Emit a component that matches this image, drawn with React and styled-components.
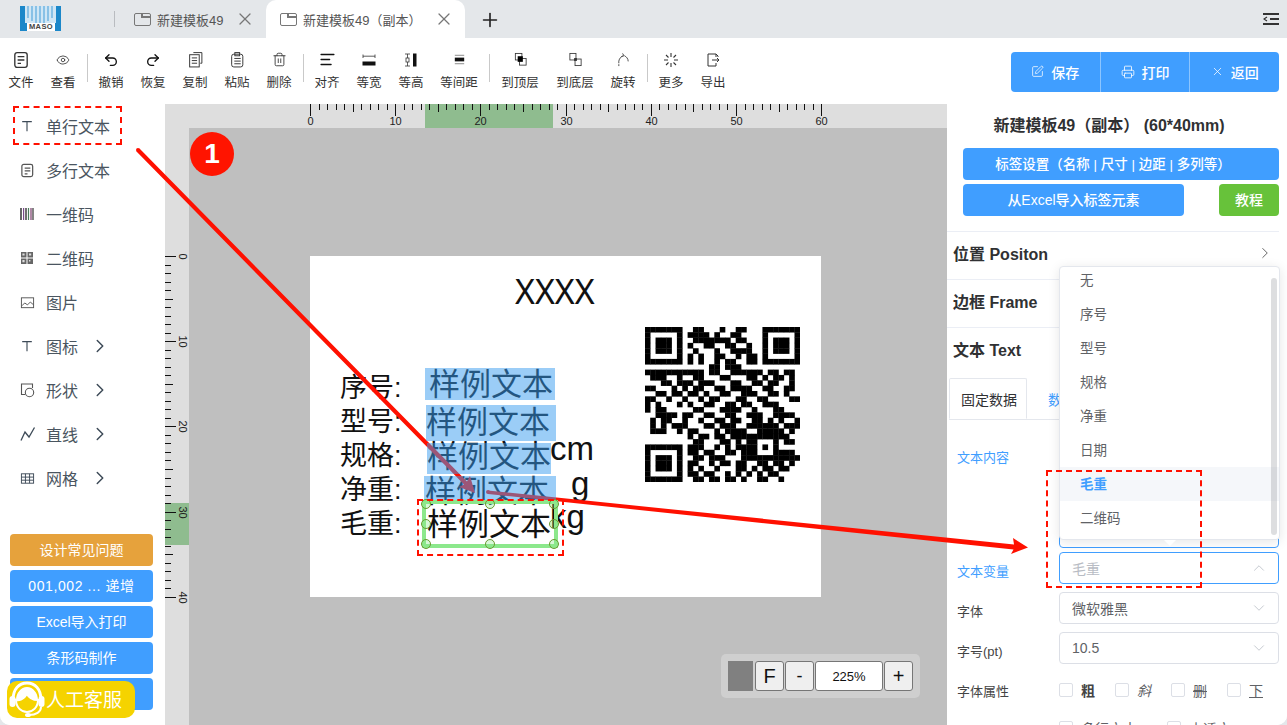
import React from "react";
import styled, { createGlobalStyle } from "styled-components";
import { Eye, Undo2, Redo2, Trash2, AlignLeft, SquarePen, Printer, X, Plus, ChevronRight, ChevronDown, ChevronUp } from "lucide-react";

const FONT = `"Liberation Sans", "Noto Sans CJK SC", sans-serif`;

const GlobalStyle = createGlobalStyle`
  html, body { margin: 0; padding: 0; background: #e4e7ea; }
  body { font-family: ${FONT}; }
  * { box-sizing: border-box; }
`;

// small hand drawn icons, viewBox 16
const Glyph = ({ size = 16, children, sw = 1.2 }) => (
  <svg width={size} height={size} viewBox="0 0 16 16" fill="none" stroke="#333" strokeWidth={sw}>
    {children}
  </svg>
);

const toolIcons = {
  file: (
    <Glyph size={18}>
      <rect x="2.5" y="1.5" width="11" height="13" rx="2" />
      <path d="M5 5h6M5 8h6M5 11h3" />
    </Glyph>
  ),
  eye: <Eye size={14} color="#333" strokeWidth={1.4} />,
  undo: <Undo2 size={16} color="#111" strokeWidth={2} />,
  redo: <Redo2 size={16} color="#111" strokeWidth={2} />,
  copy: (
    <Glyph size={17} sw={0.9}>
      <path d="M6 1.5h8v10h-1.5" />
      <rect x="2.5" y="3.5" width="9" height="11.5" />
      <path d="M4.5 6.5h5M4.5 9h5M4.5 11.5h5" />
    </Glyph>
  ),
  paste: (
    <Glyph size={17} sw={0.9}>
      <rect x="2.5" y="3" width="10.5" height="12" rx="2" />
      <rect x="5.5" y="1.5" width="4.5" height="3" />
      <path d="M5 7h6M5 9.5h6M5 12h6" />
    </Glyph>
  ),
  trash: <Trash2 size={15} color="#333" strokeWidth={1.4} />,
  align: <AlignLeft size={17} color="#111" strokeWidth={2} />,
  eqWidth: (
    <Glyph sw={0.8}>
      <path d="M2 2.5v3.5M14 2.5v3.5M2 4.2h12" />
      <rect x="1.5" y="9.5" width="13" height="4" fill="#111" stroke="none" />
    </Glyph>
  ),
  eqHeight: (
    <Glyph sw={0.8}>
      <path d="M2 2h5M2 14h5M4.5 2v4M4.5 10v4" />
      <rect x="3" y="6" width="3" height="4" />
      <rect x="10" y="1.5" width="3.5" height="13" fill="#111" stroke="none" />
    </Glyph>
  ),
  spacing: (
    <Glyph size={15} sw={0.8}>
      <path d="M3 3.5h10M3 12.5h10" stroke="#666" />
      <rect x="3" y="6" width="10" height="4" fill="#111" stroke="none" />
    </Glyph>
  ),
  top: (
    <Glyph size={15} sw={0.9}>
      <rect x="2.5" y="1.5" width="7" height="7" fill="#fff" />
      <rect x="7" y="7" width="7" height="7" fill="#fff" />
      <rect x="5" y="4.5" width="5.5" height="6" fill="#000" stroke="none" />
    </Glyph>
  ),
  bottom: (
    <Glyph size={15} sw={0.9}>
      <rect x="2" y="1.5" width="6.5" height="7" />
      <rect x="7.5" y="7.5" width="6.5" height="7" />
      <rect x="6.5" y="6.5" width="3" height="3" fill="#333" stroke="none" />
    </Glyph>
  ),
  rotate: (
    <Glyph size={15} sw={0.9}>
      <path d="M3 12c-.5-3 1-6 4-8M9 4c2 1 4 3 4 6" />
      <path d="M7 1.5l1.5 2.5-2.5 1M3 15v-2" />
    </Glyph>
  ),
  more: (
    <Glyph sw={1.1}>
      <path d="M8 1v4M8 11v4M1 8h4M11 8h4M3 3l2.5 2.5M13 3l-2.5 2.5M3 13l2.5-2.5M13 13l-2.5-2.5" />
    </Glyph>
  ),
  export: (
    <Glyph sw={1}>
      <path d="M11 5V2H3v12h8v-3M11 2l2 2v1" />
      <path d="M7 8h7M12 6l2 2-2 2" />
    </Glyph>
  ),
};

const TOOLS = [
  [["文件", "file"], ["查看", "eye"]],
  [["撤销", "undo"], ["恢复", "redo"], ["复制", "copy"], ["粘贴", "paste"], ["删除", "trash"]],
  [["对齐", "align"], ["等宽", "eqWidth"], ["等高", "eqHeight"], ["等间距", "spacing", 54]],
  [["到顶层", "top", 56], ["到底层", "bottom", 54], ["旋转", "rotate"]],
  [["更多", "more"], ["导出", "export"]],
];

const sideIcons = {
  t: (
    <Glyph size={14} sw={1.3}>
      <path d="M2.5 3h11M8 3v11" stroke="#3d4a57" />
    </Glyph>
  ),
  doc: (
    <Glyph size={15} sw={1.3}>
      <rect x="2" y="1.5" width="11.5" height="13" rx="2" stroke="#555" />
      <path d="M5 5.5h6M5 8.5h6M5 11.5h3" stroke="#555" />
    </Glyph>
  ),
  bar: (
    <svg width="14" height="14" viewBox="0 0 14 12">
      <path d="M1 0v12" stroke="#333" strokeWidth="1.5" />
      <path d="M3.6 0v12" stroke="#7a4a8a" strokeWidth="1.2" />
      <path d="M6 0v12" stroke="#333" strokeWidth="1.4" />
      <path d="M8.5 0v12" stroke="#4a7a5a" strokeWidth="1.2" />
      <path d="M11 0v12" stroke="#7a3a6a" strokeWidth="1.2" />
      <path d="M13 0v12" stroke="#333" strokeWidth="1.2" />
    </svg>
  ),
  qr: (
    <svg width="14" height="14" viewBox="0 0 14 14" fill="#666">
      <path d="M1 1h5.5v5.5H1zM7.5 1H13v5.5H7.5zM1 7.5h5.5V13H1zM7.5 7.5H13V13H7.5z" />
      <path d="M2.4 2.4h2.2v2.2H2.4zM9 2.4h2.2v2.2H9zM2.4 9h2.2v2.2H2.4zM9 9h1.4v1.4H9z" fill="#ddd" />
    </svg>
  ),
  img: (
    <Glyph size={15} sw={1}>
      <rect x="1.5" y="3" width="13" height="10.5" stroke="#555" />
      <path d="M2 11.5l3-3 3 2 3-3 3.5 3" stroke="#555" />
    </Glyph>
  ),
  shape: (
    <Glyph size={16} sw={1.1}>
      <path d="M12.5 6V2H1.5v10.5h3.5" stroke="#555" />
      <circle cx="9.5" cy="10.5" r="4.2" stroke="#555" />
    </Glyph>
  ),
  line: (
    <Glyph size={16} sw={1.3}>
      <path d="M1 14.5 L5 6 L9 11 L14.5 1.5" stroke="#3d4a57" />
    </Glyph>
  ),
  grid: (
    <Glyph size={15} sw={1}>
      <rect x="1.5" y="3" width="13" height="10" stroke="#3d4a57" />
      <path d="M1.5 6.5h13M1.5 9.8h13M5.8 3v10M10.2 3v10" stroke="#3d4a57" />
    </Glyph>
  ),
};

const SIDE_ITEMS = [
  ["单行文本", "t"],
  ["多行文本", "doc"],
  ["一维码", "bar"],
  ["二维码", "qr"],
  ["图片", "img"],
  ["图标", "t", true],
  ["形状", "shape", true],
  ["直线", "line", true],
  ["网格", "grid", true],
];

const DROP_ITEMS = ["无", "序号", "型号", "规格", "净重", "日期", "毛重", "二维码"];

// offsets on the label, in its own pixels
const FIELD_ROWS = [
  { label: "序号:", nameTop: 114, valueTop: 111, valueLeft: 119, left: 115, top: 112, w: 130, h: 32 },
  { label: "型号:", nameTop: 148, valueTop: 149, valueLeft: 116, left: 116, top: 149, w: 130, h: 36 },
  { label: "规格:", nameTop: 182, valueTop: 183, valueLeft: 117, left: 117, top: 187, w: 124, h: 31 },
  { label: "净重:", nameTop: 216, valueTop: 218, valueLeft: 115, left: 114, top: 220, w: 132, h: 27 },
];

// QR drawn from rough module data, finder + alignment patterns get stamped on top
const QR_ROWS = [
  "00000000011000100110000000000",
  "00000000111101001100000000000",
  "00000000011111110110000000000",
  "00000000100110011001000000000",
  "00000000010001001111000000000",
  "00000000101001100101100000000",
  "00000000101001011001100000000",
  "00000000000011011100000000000",
  "11111111111011001111110110110",
  "01110010011000110001101011010",
  "00011011101110001100110110010",
  "11000101011001101111001100110",
  "00110110110100110011100110100",
  "11001001001011000110011000011",
  "10100010100110011011001110000",
  "10110000011000111100100011000",
  "00111101100110011001110011110",
  "01011001001001101100110101001",
  "01010111000110111001111110111",
  "01110010110001011110011111010",
  "00000000101101101111100011100",
  "00000000011000110101100000110",
  "00000000111001010111100000000",
  "00000000110110011011100011110",
  "00000000011011100011111111111",
  "00000000110010110110011011010",
  "00000000101001000110101101100",
  "00000000110110010101010110000",
  "00000000011011011010011001000",
];

const qrCells = () => {
  const m = QR_ROWS.map((r) => r.split("").map(Number));
  const stamp = (x, y, n) => {
    for (let j = 0; j < n; j++)
      for (let i = 0; i < n; i++) {
        const d = Math.min(i, j, n - 1 - i, n - 1 - j);
        m[y + j][x + i] = d === 1 ? 0 : 1;
      }
  };
  stamp(0, 0, 7);
  stamp(22, 0, 7);
  stamp(0, 22, 7);
  stamp(20, 20, 5);
  const out = [];
  m.forEach((row, y) =>
    row.forEach((v, x) => {
      if (v) out.push(<rect key={x + "-" + y} x={x - 0.03} y={y - 0.03} width="1.06" height="1.06" />);
    })
  );
  return out;
};

const MM = 8.52;

const TopRuler = () => {
  const ticks = [];
  for (let i = 0; i <= 60; i++) {
    const x = 121.5 + Math.round(i * MM);
    const len = i % 10 === 0 ? 12 : i % 5 === 0 ? 8 : 6;
    ticks.push(<line key={i} x1={x} x2={x} y1="0" y2={len} stroke="#111" />);
    if (i % 10 === 0)
      ticks.push(
        <text key={"t" + i} x={x} y="21" fontSize="11" textAnchor="middle" fill="#222">
          {i}
        </text>
      );
  }
  return (
    <RulerSvg width="758" height="24">
      <rect x="236" y="0" width="128" height="24" fill="#8fbc8f" />
      {ticks}
    </RulerSvg>
  );
};

const LeftRuler = () => {
  const ticks = [];
  for (let i = 0; i <= 40; i++) {
    const y = 128.5 + Math.round(i * MM);
    const len = i % 10 === 0 ? 11 : i % 5 === 0 ? 8 : 6;
    ticks.push(<line key={i} x1="0" x2={len} y1={y} y2={y} stroke="#111" />);
    if (i % 10 === 0)
      ticks.push(
        <text key={"t" + i} fontSize="11" textAnchor="middle" fill="#222" transform={`translate(14 ${y}) rotate(90)`}>
          {i}
        </text>
      );
  }
  return (
    <RulerSvg width="24" height="597">
      <rect x="0" y="375" width="24" height="42" fill="#8fbc8f" />
      {ticks}
    </RulerSvg>
  );
};

const Headset = () => (
  <svg width="38" height="38" viewBox="0 0 38 38">
    <path d="M5 20C5 9 11 3 19 3s14 6 14 17" fill="none" stroke="#fff" strokeWidth="3" />
    <rect x="1.5" y="16" width="6" height="11" rx="3" fill="#fff" />
    <rect x="30.5" y="16" width="6" height="11" rx="3" fill="#fff" />
    <path d="M8 20c3 1 8-1 11-6 2 4 6 6 11 6 0 7-5 12-11 12S8 27 8 20z" fill="none" stroke="#fff" strokeWidth="2" />
    <path d="M19 14c-3 5-8 7-11 6 0-7 5-13 11-13s11 6 11 13c-5 0-9-2-11-6z" fill="#fff" />
    <path d="M33 27c0 5-5 8-12 8" fill="none" stroke="#fff" strokeWidth="2" />
    <ellipse cx="20" cy="35" rx="3" ry="2" fill="#fff" />
  </svg>
);

const App = () => {
  return (
    <Root>
      <GlobalStyle />
      <TabBar>
        <Logo>
          <svg width="41" height="25" viewBox="0 0 41 25">
            <rect width="41" height="25" fill="#1b87c9" />
            <rect x="5" width="31" height="17" fill="#cfe6f5" />
            <path d="M8 0v12M12 0v15M16 0v17M20 0v17M24 0v17M28 0v15M32 0v12" stroke="#5aa9dc" strokeWidth="1.2" />
            <rect x="7" y="17" width="28" height="8" fill="#fff" />
          </svg>
          <LogoText>MASO</LogoText>
        </Logo>
        <TabDivider />
        <Tab>
          <TabIcon />
          <TabLabel>新建模板49</TabLabel>
          <X size={20} color="#777" strokeWidth={1.5} />
        </Tab>
        <Tab $active>
          <TabIcon />
          <TabLabel>新建模板49（副本）</TabLabel>
          <X size={20} color="#777" strokeWidth={1.5} />
        </Tab>
        <AddTab>
          <Plus size={22} color="#222" strokeWidth={1.8} />
        </AddTab>
        <MenuIcon>
          <svg width="16" height="12" viewBox="0 0 16 12" fill="none" stroke="#333" strokeWidth="1.8">
            <path d="M0 1h16M7 6h9M0 11h16" />
            <path d="M4 4L1 6l3 2" strokeWidth="1.2" />
          </svg>
        </MenuIcon>
      </TabBar>

      <Toolbar>
        <ToolGroups>
          {TOOLS.map((group, gi) => (
            <React.Fragment key={gi}>
              {gi > 0 && <ToolDivider />}
              {group.map(([label, icon, w]) => (
                <Tool key={label} $w={w}>
                  <ToolIcon>{toolIcons[icon]}</ToolIcon>
                  <ToolLabel>{label}</ToolLabel>
                </Tool>
              ))}
            </React.Fragment>
          ))}
        </ToolGroups>
        <ActionGroup>
          <ActionButton>
            <SquarePen size={13} strokeWidth={1.4} />
            保存
          </ActionButton>
          <ActionButton>
            <Printer size={14} strokeWidth={1.4} />
            打印
          </ActionButton>
          <ActionButton>
            <X size={13} strokeWidth={1.4} />
            返回
          </ActionButton>
        </ActionGroup>
      </Toolbar>

      <Main>
        <Sidebar>
          <SideList>
            {SIDE_ITEMS.map(([label, icon, more]) => (
              <SideItem key={label}>
                <SideIcon>{sideIcons[icon]}</SideIcon>
                <span>{label}</span>
                {more && <ChevronRight size={22} color="#3d4a57" strokeWidth={1.6} />}
              </SideItem>
            ))}
          </SideList>
          <SideButtons>
            <SideButton $color="#e6a23c">设计常见问题</SideButton>
            <SideButton $spread>001,002 ... 递增</SideButton>
            <SideButton>Excel导入打印</SideButton>
            <SideButton>条形码制作</SideButton>
            <SideButton />
          </SideButtons>
          <ServiceBadge>
            <Headset />
            人工客服
          </ServiceBadge>
        </Sidebar>

        <Workspace>
          <RulerCorner />
          <TopRuler />
          <LeftRuler />
          <CanvasArea>
            <LabelPaper>
              <LabelTitle>XXXX</LabelTitle>
              {FIELD_ROWS.map((r) => (
                <React.Fragment key={r.label}>
                  <FieldName style={{ top: r.nameTop }}>{r.label}</FieldName>
                  <FieldValue style={{ top: r.valueTop, left: r.valueLeft }}>样例文本</FieldValue>
                  <FieldShade style={{ top: r.top, left: r.left, width: r.w, height: r.h }} />
                </React.Fragment>
              ))}
              <FieldName style={{ top: 250 }}>毛重:</FieldName>
              <FieldValue style={{ top: 251, left: 117 }}>样例文本</FieldValue>
              <SelectBox>
                {[[0, 0], [50, 0], [100, 0], [0, 50], [100, 50], [0, 100], [50, 100], [100, 100]].map(([x, y]) => (
                  <Handle key={x + "-" + y} style={{ left: `${x}%`, top: `${y}%` }} />
                ))}
              </SelectBox>
              <Unit style={{ left: 240, top: 175 }}>cm</Unit>
              <Unit style={{ left: 261, top: 210 }}>g</Unit>
              <Unit style={{ left: 240, top: 243 }}>kg</Unit>
              <QrCode>
                <svg width="155" height="155" viewBox="0 0 29 29" fill="#000">
                  {qrCells()}
                </svg>
              </QrCode>
            </LabelPaper>
            <ZoomBar>
              <ZoomSwatch />
              <ZoomButton>F</ZoomButton>
              <ZoomButton>-</ZoomButton>
              <ZoomValue>225%</ZoomValue>
              <ZoomButton>+</ZoomButton>
            </ZoomBar>
          </CanvasArea>
        </Workspace>

        <Panel>
          <PanelTitle>新建模板49（副本） (60*40mm)</PanelTitle>
          <PanelButtons>
            <PanelButton $shift>标签设置（名称 | 尺寸 | 边距 | 多列等）</PanelButton>
            <PanelButtonRow>
              <PanelButton $w="221px">从Excel导入标签元素</PanelButton>
              <PanelButton $w="60px" $color="#67c23a">教程</PanelButton>
            </PanelButtonRow>
          </PanelButtons>
          <Section>
            <SectionHead>
              位置 Positon
              <ChevronRight size={18} color="#555" strokeWidth={1.2} />
            </SectionHead>
            <SectionHead>边框 Frame</SectionHead>
            <SectionHead>文本 Text</SectionHead>
          </Section>
          <Tabs>
            <DataTab $active>固定数据</DataTab>
            <DataTab>数据列</DataTab>
          </Tabs>
          <FormRow $h="130px">
            <FormLabel $blue $top>文本内容</FormLabel>
            <TextArea />
          </FormRow>
          <FormRow>
            <FormLabel $blue>文本变量</FormLabel>
            <SelectField $open>
              <span>毛重</span>
              <ChevronUp size={18} color="#c0c4cc" strokeWidth={1.2} />
            </SelectField>
          </FormRow>
          <FormRow>
            <FormLabel>字体</FormLabel>
            <SelectField>
              <span>微软雅黑</span>
              <ChevronDown size={18} color="#c0c4cc" strokeWidth={1.2} />
            </SelectField>
          </FormRow>
          <FormRow>
            <FormLabel>字号(pt)</FormLabel>
            <SelectField>
              <span>10.5</span>
              <ChevronDown size={18} color="#c0c4cc" strokeWidth={1.2} />
            </SelectField>
          </FormRow>
          <FormRow>
            <FormLabel>字体属性</FormLabel>
            <CheckRow>
              <CheckItem $w="56px"><CheckBox /><b>粗</b></CheckItem>
              <CheckItem $w="56px"><CheckBox /><i>斜</i></CheckItem>
              <CheckItem $w="56px"><CheckBox /><s>删</s></CheckItem>
              <CheckItem $w="50px"><CheckBox /><u>下</u></CheckItem>
            </CheckRow>
          </FormRow>
          <FormRow $h="36px">
            <FormLabel />
            <CheckRow>
              <CheckItem $w="108px"><CheckBox />多行文本</CheckItem>
              <CheckItem $w="100px"><CheckBox />内透文</CheckItem>
            </CheckRow>
          </FormRow>
          <Dropdown>
            <DropList>
              {DROP_ITEMS.map((item) => (
                <DropItem key={item} $active={item === "毛重"}>{item}</DropItem>
              ))}
            </DropList>
            <DropScroll />
            <DropCaret />
          </Dropdown>
        </Panel>
      </Main>

      <Annotations width="1287" height="725" viewBox="0 0 1287 725">
        <polygon points="136.5,151.5 139.5,148.5 467,481.5 470,476 475,493 459,487 464,484.5" fill="#ff1000" />
        <circle cx="138" cy="150" r="2" fill="#ff1000" />
        <polygon points="488,490.5 488,494 1013.5,549.5 1011,554 1028,547.5 1013,538 1014,544.5" fill="#ff1000" />
        <circle cx="488" cy="492" r="2" fill="#ff1000" />
      </Annotations>
      <StepBadge>1</StepBadge>
      <DashedFrame style={{ left: 13, top: 106, width: 109, height: 39 }} />
      <DashedFrame style={{ left: 417, top: 499, width: 147, height: 57 }} />
      <DashedFrame style={{ left: 1046, top: 470, width: 156, height: 118 }} />
    </Root>
  );
};

export default App;

const Root = styled.div`
  position: relative;
  width: 1287px;
  height: 725px;
  overflow: hidden;
  background: #fff;
  border-radius: 0 0 10px 10px;
  display: flex;
  flex-direction: column;
  font-family: ${FONT};
`;

const TabBar = styled.div`
  height: 38px;
  flex: none;
  display: flex;
  align-items: flex-end;
  background: #e4e7ea;
`;

const Logo = styled.div`
  position: relative;
  width: 41px;
  height: 25px;
  margin: 0 53px 7px 20px;
  line-height: 0;
`;

const LogoText = styled.span`
  position: absolute;
  left: 7px;
  right: 6px;
  bottom: 0;
  text-align: center;
  font-size: 7.5px;
  line-height: 8px;
  font-weight: bold;
  letter-spacing: 0.4px;
  color: #444;
`;

const TabDivider = styled.div`
  width: 1px;
  height: 16px;
  margin-bottom: 11px;
  margin-right: 5px;
  background: #b9bcc0;
`;

const Tab = styled.div`
  height: 38px;
  width: ${(p) => (p.$active ? "199px" : "146px")};
  padding: 0 11px 0 14px;
  display: flex;
  align-items: center;
  gap: 6px;
  color: #555;
  font-size: 13px;
  border-radius: 10px 10px 0 0;
  background: ${(p) => (p.$active ? "#fff" : "transparent")};
`;

const TabIcon = styled.span`
  position: relative;
  flex: none;
  width: 17px;
  height: 13px;
  border: 1.5px solid #777;
  border-radius: 2px;
  &::before {
    content: "";
    position: absolute;
    left: 6px;
    top: 2.5px;
    right: -1px;
    height: 1.5px;
    background: #777;
  }
  &::after {
    content: "";
    position: absolute;
    left: 6px;
    top: -1px;
    width: 1.5px;
    height: 4px;
    background: #777;
  }
`;

const TabLabel = styled.span`
  flex: 1;
  white-space: nowrap;
`;

const AddTab = styled.div`
  margin: 0 0 7px 14px;
  line-height: 0;
`;

const MenuIcon = styled.div`
  margin: 0 8px 13px auto;
  line-height: 0;
`;

const Toolbar = styled.div`
  height: 66px;
  flex: none;
  display: flex;
  justify-content: space-between;
  padding-right: 8px;
  background: #fff;
`;

const ToolGroups = styled.div`
  display: flex;
  align-items: flex-start;
`;

const Tool = styled.div`
  width: ${(p) => (p.$w ? p.$w + "px" : "42px")};
  display: flex;
  flex-direction: column;
  align-items: center;
  padding-top: 13px;
`;

const ToolIcon = styled.div`
  height: 17px;
  display: flex;
  align-items: center;
  justify-content: center;
`;

const ToolLabel = styled.div`
  margin-top: 5px;
  font-size: 12.5px;
  line-height: 20px;
  color: #333;
  white-space: nowrap;
`;

const ToolDivider = styled.div`
  width: 1px;
  height: 28px;
  margin: 16px 2px 0 3px;
  background: #c9c9c9;
`;

const ActionGroup = styled.div`
  display: flex;
  width: 268px;
  height: 40px;
  margin-top: 14px;
  border-radius: 4px;
  overflow: hidden;
  background: #409eff;
`;

const ActionButton = styled.div`
  flex: 1;
  display: flex;
  align-items: center;
  justify-content: center;
  gap: 7px;
  padding-bottom: 1px;
  font-size: 14px;
  font-weight: 500;
  color: #fff;
  & + & {
    border-left: 1px solid #8cc5ff;
  }
`;

const Main = styled.div`
  flex: 1;
  min-height: 0;
  display: flex;
`;

const Sidebar = styled.div`
  position: relative;
  width: 165px;
  flex: none;
  display: flex;
  flex-direction: column;
  justify-content: space-between;
  padding-bottom: 15px;
  background: #fff;
`;

const SideList = styled.div`
  display: flex;
  flex-direction: column;
`;

const SideItem = styled.div`
  height: 44px;
  display: flex;
  align-items: center;
  padding-left: 20px;
  font-size: 16px;
  color: #4a5560;
  span {
    margin-right: 11px;
  }
`;

const SideIcon = styled.div`
  width: 26px;
  display: flex;
  align-items: center;
  flex: none;
`;

const SideButtons = styled.div`
  display: flex;
  flex-direction: column;
  gap: 4px;
  padding: 0 12px 0 10px;
`;

const SideButton = styled.div`
  height: 32px;
  display: flex;
  align-items: center;
  justify-content: center;
  padding-bottom: 2px;
  border-radius: 4px;
  font-size: 14px;
  letter-spacing: ${(p) => (p.$spread ? "0.6px" : "0")};
  color: #fff;
  background: ${(p) => p.$color || "#409eff"};
`;

const ServiceBadge = styled.div`
  position: absolute;
  left: 7px;
  bottom: 7px;
  width: 128px;
  height: 37px;
  display: flex;
  align-items: center;
  padding: 0 0 2px 1px;
  border-radius: 10px;
  font-size: 19px;
  color: #fff;
  background: #f5d300;
`;

const Workspace = styled.div`
  flex: 1;
  min-width: 0;
  display: grid;
  grid-template-columns: 24px 1fr;
  grid-template-rows: 24px 1fr;
  background: #dedede;
`;

const RulerCorner = styled.div`
  background: #dedede;
`;

const RulerSvg = styled.svg`
  display: block;
  background: #dedede;
`;

const CanvasArea = styled.div`
  position: relative;
  padding: 128px 0 0 121px;
  background: #bfbfbf;
`;

const LabelPaper = styled.div`
  position: relative;
  width: 511px;
  height: 341px;
  background: #fff;
  color: #111;
`;

const LabelTitle = styled.div`
  position: absolute;
  left: 205px;
  top: 14px;
  font-family: "Noto Sans", sans-serif;
  font-size: 34px;
  line-height: 42px;
`;

const FieldName = styled.div`
  position: absolute;
  left: 30px;
  font-size: 27px;
  line-height: 36px;
  white-space: nowrap;
`;

const FieldValue = styled.div`
  position: absolute;
  font-size: 31px;
  line-height: 36px;
  white-space: nowrap;
`;

const FieldShade = styled.div`
  position: absolute;
  z-index: 3;
  background: rgba(56, 155, 240, 0.5);
`;

const SelectBox = styled.div`
  position: absolute;
  left: 112px;
  top: 244px;
  width: 136px;
  height: 48px;
  border: 4px solid #8ce88c;
  z-index: 3;
`;

const Handle = styled.span`
  position: absolute;
  width: 10px;
  height: 10px;
  margin: -5px 0 0 -5px;
  border: 1px solid #6a9a30;
  border-radius: 50%;
  background: rgba(140, 232, 140, 0.35);
`;

const Unit = styled.div`
  position: absolute;
  font-size: 33px;
  line-height: 36px;
`;

const QrCode = styled.div`
  position: absolute;
  left: 335px;
  top: 71px;
  line-height: 0;
`;

const ZoomBar = styled.div`
  position: absolute;
  left: 532px;
  top: 526px;
  width: 199px;
  height: 44px;
  padding: 7px;
  display: flex;
  gap: 1px;
  border-radius: 5px;
  background: #cfcfcf;
`;

const ZoomSwatch = styled.div`
  width: 25px;
  margin-right: 1px;
  background: #808080;
`;

const ZoomButton = styled.div`
  width: 29px;
  display: flex;
  align-items: center;
  justify-content: center;
  border: 1px solid #767676;
  border-radius: 3px;
  font-size: 20px;
  color: #111;
  background: #efefef;
  &:nth-child(3) {
    font-size: 18px;
  }
`;

const ZoomValue = styled.div`
  width: 68px;
  display: flex;
  align-items: center;
  justify-content: center;
  border: 1px solid #767676;
  border-radius: 3px;
  font-size: 13px;
  color: #111;
  background: #fff;
`;

const Panel = styled.div`
  position: relative;
  width: 340px;
  flex: none;
  padding: 0 8px 0 0;
  background: #fff;
  overflow: hidden;
`;

const PanelTitle = styled.div`
  height: 44px;
  line-height: 44px;
  text-align: center;
  padding-right: 8px;
  font-size: 16px;
  font-weight: bold;
  color: #303133;
  white-space: pre;
`;

const PanelButtons = styled.div`
  display: flex;
  flex-direction: column;
  gap: 4px;
  padding-left: 16px;
`;

const PanelButtonRow = styled.div`
  display: flex;
  justify-content: space-between;
`;

const PanelButton = styled.div`
  height: 32px;
  width: ${(p) => p.$w || "100%"};
  display: flex;
  align-items: center;
  justify-content: center;
  padding: 0 ${(p) => (p.$shift ? "16px" : "0")} 2px 0;
  border-radius: 4px;
  font-size: ${(p) => (p.$shift ? "13.5px" : "14px")};
  font-weight: 500;
  color: #fff;
  background: ${(p) => p.$color || "#409eff"};
`;

const Section = styled.div`
  margin-top: 15px;
`;

const SectionHead = styled.div`
  height: 48px;
  display: flex;
  align-items: center;
  justify-content: space-between;
  padding: 0 5px 5px 6px;
  font-size: 16px;
  font-weight: bold;
  color: #303133;
  border-top: 1px solid #ebeef5;
`;

const Tabs = styled.div`
  display: flex;
  height: 42px;
  margin: 3px 0 0 2px;
  border-bottom: 1px solid #e4e7ed;
`;

const DataTab = styled.div`
  padding: 0 20px 0 ${(p) => (p.$active ? "11px" : "21px")};
  width: ${(p) => (p.$active ? "78px" : "auto")};
  display: flex;
  align-items: center;
  font-size: 14px;
  white-space: nowrap;
  color: ${(p) => (p.$active ? "#303133" : "#409eff")};
  ${(p) => p.$active && "border: 1px solid #e4e7ed; border-bottom-color: #fff; border-radius: 2px 2px 0 0;"}
`;

const FormRow = styled.div`
  display: flex;
  align-items: center;
  height: ${(p) => p.$h || "40px"};
  padding-left: 10px;
`;

const FormLabel = styled.div`
  width: 102px;
  flex: none;
  font-size: 13px;
  color: ${(p) => (p.$blue ? "#409eff" : "#444")};
  align-self: ${(p) => (p.$top ? "flex-start" : "center")};
  margin-top: ${(p) => (p.$top ? "27px" : "0")};
`;

const TextArea = styled.div`
  width: 220px;
  height: 122px;
  margin-top: 3px;
  border: 1px solid #409eff;
  border-radius: 4px;
`;

const SelectField = styled.div`
  width: 220px;
  height: 32px;
  align-self: flex-start;
  margin-top: 2px;
  padding: 0 10px 0 12px;
  display: flex;
  align-items: center;
  justify-content: space-between;
  border: 1px solid ${(p) => (p.$open ? "#409eff" : "#dcdfe6")};
  border-radius: 4px;
  font-size: 14px;
  color: ${(p) => (p.$open ? "#b8bcc4" : "#606266")};
`;

const CheckRow = styled.div`
  display: flex;
`;

const CheckItem = styled.div`
  width: ${(p) => p.$w};
  display: flex;
  align-items: center;
  gap: 8px;
  font-size: 14px;
  color: #606266;
  b { color: #444; }
  i { font-style: italic; }
`;

const CheckBox = styled.span`
  width: 14px;
  height: 14px;
  flex: none;
  border: 1px solid #dcdfe6;
  border-radius: 2px;
  background: #fff;
`;

const Dropdown = styled.div`
  position: absolute;
  left: 112px;
  top: 162px;
  width: 221px;
  height: 274px;
  z-index: 3;
  border: 1px solid #e4e7ed;
  border-radius: 4px;
  background: #fff;
  box-shadow: 0 2px 12px rgba(0, 0, 0, 0.1);
`;

const DropList = styled.div`
  height: 100%;
  overflow: hidden;
  & > div:first-child {
    margin-top: -4px;
  }
`;

const DropItem = styled.div`
  height: 34px;
  line-height: 36px;
  padding-left: 20px;
  font-size: 13.5px;
  font-weight: ${(p) => (p.$active ? "bold" : "normal")};
  color: ${(p) => (p.$active ? "#409eff" : "#606266")};
  background: ${(p) => (p.$active ? "#f5f7fa" : "transparent")};
`;

const DropScroll = styled.div`
  position: absolute;
  right: 2px;
  top: 11px;
  width: 6px;
  height: 257px;
  border-radius: 3px;
  background: rgba(144, 147, 153, 0.3);
`;

const DropCaret = styled.div`
  position: absolute;
  left: 104px;
  bottom: -7px;
  width: 0;
  height: 0;
  border-left: 6px solid transparent;
  border-right: 6px solid transparent;
  border-top: 6px solid #fff;
`;

const Annotations = styled.svg`
  position: absolute;
  left: 0;
  top: 0;
  z-index: 2;
  pointer-events: none;
`;

const StepBadge = styled.div`
  position: absolute;
  left: 190px;
  top: 132px;
  z-index: 4;
  width: 44px;
  height: 44px;
  border-radius: 50%;
  display: flex;
  align-items: center;
  justify-content: center;
  font-size: 28px;
  font-weight: bold;
  color: #fff;
  background: #ff1400;
`;

const DashedFrame = styled.div`
  position: absolute;
  z-index: 4;
  border: 2px dashed #ff1000;
  pointer-events: none;
`;
